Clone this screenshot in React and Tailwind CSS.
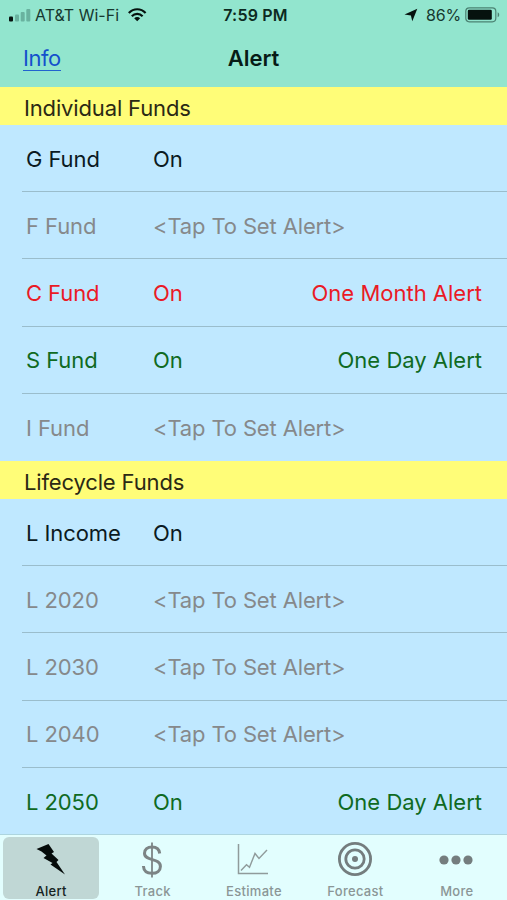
const TONES = {
  active: "text-[#0b1a22]",
  unset: "text-[#86898b]",
  red: "text-[#ea1a26]",
  green: "text-[#0f6a22]",
};

const SECTIONS = [
  {
    title: "Individual Funds",
    rows: [
      { name: "G Fund", status: "On", tone: "active" },
      { name: "F Fund", status: "<Tap To Set Alert>", tone: "unset" },
      { name: "C Fund", status: "On", alert: "One Month Alert", tone: "red" },
      { name: "S Fund", status: "On", alert: "One Day Alert", tone: "green" },
      { name: "I Fund", status: "<Tap To Set Alert>", tone: "unset" },
    ],
  },
  {
    title: "Lifecycle Funds",
    rows: [
      { name: "L Income", status: "On", tone: "active" },
      { name: "L 2020", status: "<Tap To Set Alert>", tone: "unset" },
      { name: "L 2030", status: "<Tap To Set Alert>", tone: "unset" },
      { name: "L 2040", status: "<Tap To Set Alert>", tone: "unset" },
      { name: "L 2050", status: "On", alert: "One Day Alert", tone: "green" },
    ],
  },
];

function StatusBar() {
  return (
    <div className="grid h-[30px] grid-cols-[1fr_auto_1fr] items-center pr-[7px] pl-[9px] text-[16px] text-[#16382f]">
      <div className="flex items-center">
        <svg width="22" height="14" viewBox="0 0 22 14" className="shrink-0">
          <rect x="0" y="8.500" width="4" height="5" rx="1" fill="#06120e" />
          <rect x="6" y="6.500" width="4" height="7" rx="1" fill="#69b29f" />
          <rect x="11.700" y="4" width="4" height="9.500" rx="1" fill="#69b29f" />
          <rect x="17.300" y="1" width="4" height="12.500" rx="1" fill="#69b29f" />
        </svg>
        <span className="ml-[4px] w-[85px] text-[16px] whitespace-nowrap">AT&amp;T Wi-Fi</span>
        <svg width="20" height="14" viewBox="0 0 20 14" className="ml-[8px] shrink-0" fill="none" stroke="#06120e">
          <path d="M.8 5C5.700 0 12.700 0 17.600 5" strokeWidth="2.200" />
          <path d="M3.800 8.200c3-3 7.800-3 10.800 0" strokeWidth="2.200" />
          <path d="M9.200 13.200 6.200 10.200c1.700-1.500 4.300-1.500 6 0z" fill="#06120e" stroke="none" />
        </svg>
      </div>
      <span className="pl-[2px] font-semibold tracking-[0.2px] text-[#0c2a21]">7:59 PM</span>
      <div className="flex items-center justify-end">
        <svg width="14" height="14" viewBox="0 0 14 14" className="mr-[8px]">
          <path d="M13.300.7 8.300 13.200 6.900 7.500.5 6.500z" fill="#06120e" />
        </svg>
        <span className="mr-[4px] tracking-[-0.200px]">86%</span>
        <svg width="35" height="16" viewBox="0 0 35 16">
          <rect x=".8" y=".8" width="30" height="14" rx="3.500" fill="none" stroke="#4b8272" strokeWidth="1.200" />
          <rect x="2.800" y="2.800" width="24" height="10" rx="1.200" fill="#06120e" />
          <path d="M32.700 5.300c2 .8 2 4.200 0 5z" fill="#4b8272" />
        </svg>
      </div>
    </div>
  );
}

function NavBar() {
  return (
    <div className="grid h-[57px] grid-cols-[1fr_auto_1fr] items-center px-[23px]">
      <a className="justify-self-start border-b border-[#2163cf] text-[22px] leading-[24px] tracking-[-0.500px] text-[#1450cc]">
        Info
      </a>
      <h1 className="pb-[1px] text-[22px] font-semibold text-[#071b16]">Alert</h1>
    </div>
  );
}

function FundRow({ row, last }) {
  return (
    <li className={`flex h-[67.200px] pl-[22px] text-[22px] ${TONES[row.tone]}`}>
      <div className={`flex flex-1 items-center pt-[2px] pr-[25px] pl-[4px] ${last ? "" : "border-b border-[#9abdcc]"}`}>
        <span className="w-[127px] tracking-[-0.080px] whitespace-nowrap">{row.name}</span>
        <span className="tracking-[-0.140px] whitespace-nowrap">{row.status}</span>
        {row.alert && <span className="ml-auto whitespace-nowrap">{row.alert}</span>}
      </div>
    </li>
  );
}

function BoltIcon() {
  return (
    <svg width="36" height="34" viewBox="0 0 36 34" fill="#050b0a">
      <path d="M3.500 6 15.500 1 21 9 18.500 10.500 25.500 17 23.500 19 32 31.500 17.500 21.500 19.500 20 10.500 15 13.500 12.500 8.500 8.500z" />
    </svg>
  );
}

function DollarIcon() {
  return (
    <svg width="24" height="38" viewBox="0 0 24 38" className="mr-[2px]" fill="none" stroke="#7c8485">
      <path d="M19.700 12.500C19.300 8.300 16.500 6 12 6c-4.500 0-7.500 2.400-7.500 6.200 0 8.400 15.900 4.500 15.900 13.200 0 4.300-3.400 6.900-8.400 6.900-5 0-8.300-2.600-8.600-7.300" strokeWidth="3" />
      <path d="M12 1.500v35" strokeWidth="1.800" />
    </svg>
  );
}

function ChartIcon() {
  return (
    <svg width="32" height="32" viewBox="0 0 32 32" className="mr-[2px] mb-[2px]" fill="none" stroke="#909b9b">
      <path d="M1.500 1v29.500H31" strokeWidth="1.500" />
      <path d="M4 27.500 9.500 21.800 12.500 24.300 18 10.500 22 15.500 30 7" strokeWidth="1.400" />
    </svg>
  );
}

function TargetIcon() {
  return (
    <svg width="36" height="36" viewBox="0 0 36 36" className="mb-[2px]" fill="none" stroke="#747d7e">
      <circle cx="18" cy="18" r="15.600" strokeWidth="2.800" />
      <circle cx="18" cy="18" r="9.200" strokeWidth="2.800" />
      <circle cx="18" cy="18" r="3" fill="#747d7e" stroke="none" />
    </svg>
  );
}

function MoreIcon() {
  return (
    <svg width="34" height="12" viewBox="0 0 34 12" className="mr-[2px]" fill="#747d7e">
      <circle cx="5" cy="6" r="4.600" />
      <circle cx="17" cy="6" r="4.600" />
      <circle cx="29" cy="6" r="4.600" />
    </svg>
  );
}

const TABS = [
  { label: "Alert", Icon: BoltIcon, active: true },
  { label: "Track", Icon: DollarIcon },
  { label: "Estimate", Icon: ChartIcon },
  { label: "Forecast", Icon: TargetIcon },
  { label: "More", Icon: MoreIcon },
];

function TabBar() {
  return (
    <nav className="grid h-[66px] shrink-0 grid-cols-5 border-t border-[#add5df] bg-[#e2fefe]">
      {TABS.map(({ label, Icon, active }) => (
        <div key={label} className="pt-[2px] pr-[2px] pb-[2px] pl-[3px]">
          <div
            className={`flex h-full flex-col items-center rounded-[6px] ${
              active ? "bg-[#c0d7d5] text-[#152322]" : "text-[#8b9696]"
            }`}
          >
            <div className="flex h-[45px] items-center">
              <Icon />
            </div>
            <span className="pt-px text-[13px] leading-[16px] font-medium tracking-[0.3px]">{label}</span>
          </div>
        </div>
      ))}
    </nav>
  );
}

export default function App() {
  return (
    <div className="flex h-[900px] w-[507px] flex-col overflow-hidden bg-[#bfe8ff] font-['Inter',sans-serif]">
      <header className="h-[87px] shrink-0 bg-[#92e5ce]">
        <StatusBar />
        <NavBar />
      </header>
      <main className="h-[747px] shrink-0 overflow-hidden">
        {SECTIONS.map((section) => (
          <section key={section.title}>
            <h2 className="flex h-[38px] items-center bg-[#fffd78] pt-[5px] pl-[24px] text-[22px] tracking-[-0.150px] text-[#2b2914]">
              {section.title}
            </h2>
            <ul>
              {section.rows.map((row, i) => (
                <FundRow key={row.name} row={row} last={i === section.rows.length - 1} />
              ))}
            </ul>
          </section>
        ))}
      </main>
      <TabBar />
    </div>
  );
}
